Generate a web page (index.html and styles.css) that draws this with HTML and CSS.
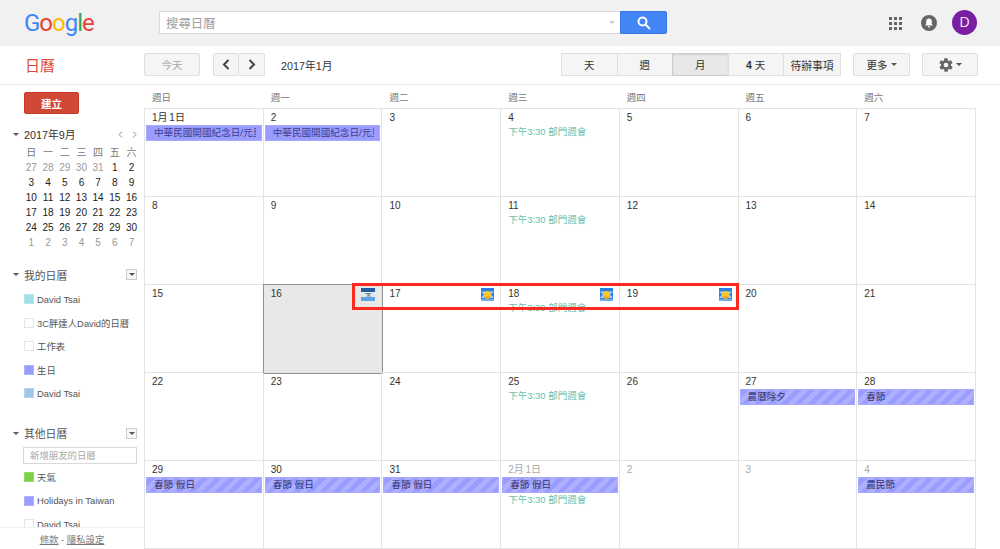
FILE: index.html
```html
<!DOCTYPE html>
<html lang="zh-Hant">
<head>
  <meta charset="UTF-8">
  <meta name="viewport" content="width=device-width, initial-scale=1">
  <title>日曆</title>
  <link rel="stylesheet" href="styles.css">
</head>
<body>
<svg class="defs" width="0" height="0">
  <symbol id="sun" viewBox="0 0 13 13">
    <rect width="13" height="13" fill="#2b7fe0"/>
    <path d="M0 3.500h13L10 6.500l3 3.500H0l3-3.500z" fill="#a9d2f2"/>
    <circle cx="6.500" cy="6.500" r="3.500" fill="#fcc62a"/>
    <path d="M3 8.500h7l-2 2.500H5z" fill="#f2a51c"/>
    <rect y="11" width="13" height="2" fill="#6fb0ea"/>
  </symbol>
  <symbol id="cloud" viewBox="0 0 14 13">
    <rect width="14" height="13" fill="#e4e9ee"/>
    <rect width="14" height="4" fill="#1f5d9c"/>
    <path d="M3 5h8L8 7l3 1.500H5L7 7z" fill="#7d8c9c"/>
    <rect y="9" width="14" height="4" fill="#5fa3e4"/>
  </symbol>
</svg>

<header class="topbar">
  <div class="logo"><span class="g-blue">G</span><span class="g-red">o</span><span class="g-yellow">o</span><span class="g-blue">g</span><span class="g-green">l</span><span class="g-red">e</span></div>
  <div class="search">
    <div class="search-input">
      <span>搜尋日曆</span>
      <i class="search-caret"></i>
    </div>
    <button class="search-btn">
      <svg width="14" height="14" viewBox="0 0 14 14" fill="none" stroke="#fff" stroke-width="2"><circle cx="5.500" cy="5.500" r="4"/><path d="M8.500 8.500l4.500 4.500"/></svg>
    </button>
  </div>
  <div class="top-icons">
    <svg class="apps" width="13" height="13" viewBox="0 0 13 13" fill="#666">
      <rect width="3" height="3"/><rect x="5" width="3" height="3"/><rect x="10" width="3" height="3"/>
      <rect y="5" width="3" height="3"/><rect x="5" y="5" width="3" height="3"/><rect x="10" y="5" width="3" height="3"/>
      <rect y="10" width="3" height="3"/><rect x="5" y="10" width="3" height="3"/><rect x="10" y="10" width="3" height="3"/>
    </svg>
    <svg class="bell" width="16" height="16" viewBox="0 0 16 16">
      <circle cx="8" cy="8" r="8" fill="#666"/>
      <path d="M8 3.500c-1.800 0-2.800 1.300-2.800 3v2.200L4.200 10.400h7.600l-1-1.700V6.500c0-1.700-1-3-2.800-3z" fill="#fff"/>
      <path d="M6.800 11.200h2.400a1.200 1.200 0 0 1-2.400 0z" fill="#fff"/>
    </svg>
    <div class="avatar">D</div>
  </div>
</header>

<div class="toolbar">
  <div class="app-name">日曆</div>
  <button class="btn btn-today">今天</button>
  <div class="nav-group">
    <button class="btn nav-btn">
      <svg width="8" height="11" viewBox="0 0 8 11" fill="none" stroke="#444" stroke-width="2"><path d="M6.500 1L2 5.500 6.500 10"/></svg>
    </button>
    <button class="btn nav-btn">
      <svg width="8" height="11" viewBox="0 0 8 11" fill="none" stroke="#444" stroke-width="2"><path d="M1.500 1L6 5.500 1.500 10"/></svg>
    </button>
  </div>
  <div class="range">2017年1月</div>
  <div class="views">
    <button class="btn view">天</button>
    <button class="btn view">週</button>
    <button class="btn view view-on">月</button>
    <button class="btn view"><b>4</b>&nbsp;天</button>
    <button class="btn view">待辦事項</button>
  </div>
  <button class="btn btn-more">更多<i class="caret"></i></button>
  <button class="btn btn-gear">
    <svg width="16" height="16" viewBox="0 0 24 24" fill="#666"><path d="M19.400 13c.1-.3.1-.7.1-1s0-.7-.1-1l2.100-1.600c.2-.2.300-.4.100-.7l-2-3.400c-.1-.2-.4-.3-.6-.2l-2.500 1c-.5-.4-1.100-.7-1.700-1l-.4-2.600c0-.3-.2-.5-.5-.5h-4c-.3 0-.5.2-.5.500l-.4 2.600c-.6.300-1.200.6-1.700 1l-2.500-1c-.2-.1-.5 0-.6.200l-2 3.400c-.1.300-.1.500.1.700L4.600 11c-.1.300-.1.700-.1 1s0 .7.100 1l-2.100 1.600c-.2.200-.3.400-.1.700l2 3.400c.1.200.4.300.6.200l2.500-1c.5.400 1.100.7 1.700 1l.4 2.600c0 .3.200.5.500.5h4c.3 0 .5-.2.500-.5l.4-2.600c.6-.3 1.200-.6 1.700-1l2.500 1c.2.100.5 0 .6-.2l2-3.400c.1-.3.100-.5-.1-.7zM12 15.500a3.500 3.500 0 1 1 0-7 3.500 3.500 0 0 1 0 7z"/></svg>
    <i class="caret"></i>
  </button>
</div>

<main class="main">
  <aside class="sidebar">
    <div class="side-scroll">
      <button class="create">建立</button>

      <div class="side-head mini-head">
        <i class="caret"></i><span class="mini-title">2017年9月</span>
        <span class="mini-arrows">
          <svg width="5" height="7" viewBox="0 0 5 7" fill="none" stroke="#888"><path d="M4 .5l-3 3 3 3"/></svg>
          <svg width="5" height="7" viewBox="0 0 5 7" fill="none" stroke="#888"><path d="M1 .5l3 3-3 3"/></svg>
        </span>
      </div>
      <div class="mini">
        <span class="dow">日</span><span class="dow">一</span><span class="dow">二</span><span class="dow">三</span><span class="dow">四</span><span class="dow">五</span><span class="dow">六</span>
        <span class="off">27</span><span class="off">28</span><span class="off">29</span><span class="off">30</span><span class="off">31</span><span>1</span><span>2</span>
        <span>3</span><span>4</span><span>5</span><span>6</span><span>7</span><span>8</span><span>9</span>
        <span>10</span><span>11</span><span>12</span><span>13</span><span>14</span><span>15</span><span>16</span>
        <span>17</span><span>18</span><span>19</span><span>20</span><span>21</span><span>22</span><span>23</span>
        <span>24</span><span>25</span><span>26</span><span>27</span><span>28</span><span>29</span><span>30</span>
        <span class="off">1</span><span class="off">2</span><span class="off">3</span><span class="off">4</span><span class="off">5</span><span class="off">6</span><span class="off">7</span>
      </div>

      <div class="side-head my-head">
        <i class="caret"></i><span class="side-title">我的日曆</span><span class="drop"><i class="caret"></i></span>
      </div>
      <ul class="cal-list">
        <li><i class="swatch sw-teal"></i>David Tsai</li>
        <li><i class="swatch"></i>3C胖達人David的日曆</li>
        <li><i class="swatch"></i>工作表</li>
        <li><i class="swatch sw-purple"></i>生日</li>
        <li><i class="swatch sw-blue"></i>David Tsai</li>
      </ul>

      <div class="side-head other-head">
        <i class="caret"></i><span class="side-title">其他日曆</span><span class="drop"><i class="caret"></i></span>
      </div>
      <div class="add-friend">新增朋友的日曆</div>
      <ul class="cal-list other-list">
        <li><i class="swatch sw-green"></i>天氣</li>
        <li><i class="swatch sw-purple"></i>Holidays in Taiwan</li>
        <li><i class="swatch"></i>David Tsai</li>
      </ul>
    </div>
    <div class="side-foot"><a>條款</a> - <a>隱私設定</a></div>
  </aside>

  <section class="month">
    <div class="dow-row">
      <span>週日</span><span>週一</span><span>週二</span><span>週三</span><span>週四</span><span>週五</span><span>週六</span>
    </div>
    <div class="grid">
      <div class="cell"><div class="date">1月 1日</div><div class="event"><span>中華民國開國紀念日/元旦</span></div></div>
      <div class="cell"><div class="date">2</div><div class="event"><span>中華民國開國紀念日/元旦</span></div></div>
      <div class="cell"><div class="date">3</div></div>
      <div class="cell"><div class="date">4</div><div class="timed">下午3:30 部門週會</div></div>
      <div class="cell"><div class="date">5</div></div>
      <div class="cell"><div class="date">6</div></div>
      <div class="cell"><div class="date">7</div></div>

      <div class="cell"><div class="date">8</div></div>
      <div class="cell"><div class="date">9</div></div>
      <div class="cell"><div class="date">10</div></div>
      <div class="cell"><div class="date">11</div><div class="timed">下午3:30 部門週會</div></div>
      <div class="cell"><div class="date">12</div></div>
      <div class="cell"><div class="date">13</div></div>
      <div class="cell"><div class="date">14</div></div>

      <div class="cell"><div class="date">15</div></div>
      <div class="cell today"><div class="date">16<svg class="wx wx-wide"><use href="#cloud"/></svg></div></div>
      <div class="cell"><div class="date">17<svg class="wx"><use href="#sun"/></svg></div></div>
      <div class="cell"><div class="date">18<svg class="wx"><use href="#sun"/></svg></div><div class="timed">下午3:30 部門週會</div></div>
      <div class="cell"><div class="date">19<svg class="wx"><use href="#sun"/></svg></div></div>
      <div class="cell"><div class="date">20</div></div>
      <div class="cell"><div class="date">21</div></div>

      <div class="cell"><div class="date">22</div></div>
      <div class="cell"><div class="date">23</div></div>
      <div class="cell"><div class="date">24</div></div>
      <div class="cell"><div class="date">25</div><div class="timed">下午3:30 部門週會</div></div>
      <div class="cell"><div class="date">26</div></div>
      <div class="cell"><div class="date">27</div><div class="event stripe"><span>農曆除夕</span></div></div>
      <div class="cell"><div class="date">28</div><div class="event stripe"><span>春節</span></div></div>

      <div class="cell"><div class="date">29</div><div class="event stripe"><span>春節 假日</span></div></div>
      <div class="cell"><div class="date">30</div><div class="event stripe"><span>春節 假日</span></div></div>
      <div class="cell"><div class="date">31</div><div class="event stripe"><span>春節 假日</span></div></div>
      <div class="cell"><div class="date out">2月 1日</div><div class="event stripe"><span>春節 假日</span></div><div class="timed">下午3:30 部門週會</div></div>
      <div class="cell"><div class="date out">2</div></div>
      <div class="cell"><div class="date out">3</div></div>
      <div class="cell"><div class="date out">4</div><div class="event stripe"><span>農民節</span></div></div>
    </div>
  </section>
</main>

<div class="highlight"></div>
</body>
</html>
```

FILE: styles.css
```css
* {
  box-sizing: border-box;
}
body {
  margin: 0;
  height: 549px;
  overflow: hidden;
  background: #fff;
  color: #333;
  font-family: "Liberation Sans", "Noto Sans CJK TC", sans-serif;
  font-size: 10px;
  position: relative;
}
i {
  display: block;
}
ul {
  list-style: none;
  margin: 0;
  padding: 0;
}
.defs {
  position: absolute;
}

/* top bar */
.topbar {
  height: 46px;
  background: #f1f1f1;
  display: flex;
  align-items: center;
  padding: 0 23px 0 24px;
}
.logo {
  width: 135px;
  font-family: Roboto, sans-serif;
  font-size: 24px;
  letter-spacing: -1px;
  line-height: 46px;
}
.g-blue { color: #4285f4; }
.g-red { color: #ea4335; }
.g-yellow { color: #fbbc05; }
.g-green { color: #34a853; }
.search {
  display: flex;
  width: 508px;
  height: 23px;
  margin-top: -1px;
}
.search-input {
  flex: 1;
  display: flex;
  align-items: center;
  justify-content: space-between;
  background: #fff;
  border: 1px solid #d9d9d9;
  border-right: none;
  padding: 0 5px 0 6px;
  color: #a0a0a0;
  font-size: 12.400px;
}
.search-caret {
  border: 3px solid transparent;
  border-top: 3px solid #ccc;
  border-bottom: none;
}
.search-btn {
  width: 47px;
  background: #4285f4;
  border: 1px solid #3b78e7;
  border-radius: 0 2px 2px 0;
  padding: 0;
  display: flex;
  align-items: center;
  justify-content: center;
}
.top-icons {
  margin-left: auto;
  display: flex;
  align-items: center;
}
.bell {
  margin-left: 19px;
}
.avatar {
  margin: -1px 0 0 15px;
  width: 25px;
  height: 25px;
  border-radius: 50%;
  background: #7b1fa2;
  color: #f0e0f5;
  font-size: 14px;
  line-height: 25px;
  text-align: center;
}

/* toolbar */
.toolbar {
  height: 39px;
  border-bottom: 1px solid #ebebeb;
  display: flex;
  align-items: center;
  padding: 0 22px 1px 25px;
}
.app-name {
  width: 119px;
  color: #dd4b39;
  font-size: 15px;
}
.btn {
  height: 23px;
  background: #f5f5f5;
  border: 1px solid #dfdfdf;
  border-radius: 2px;
  color: #333;
  font-family: inherit;
  font-size: 10.500px;
  padding: 0;
  display: flex;
  align-items: center;
  justify-content: center;
}
.btn-today {
  width: 56px;
  color: #aaa;
}
.nav-group {
  display: flex;
  margin-left: 13px;
}
.nav-btn {
  width: 26px;
}
.nav-btn + .nav-btn {
  border-left: none;
  border-radius: 0 2px 2px 0;
}
.range {
  margin-left: 16px;
  font-size: 10.800px;
}
.views {
  display: flex;
  margin-left: auto;
}
.view {
  width: 56.500px;
  margin-left: -1px;
  border-radius: 0;
}
.view:last-child {
  width: 58px;
  font-size: 10.800px;
}
.view-on {
  background: #e8e8e8;
  border-color: #ccc;
  box-shadow: inset 0 1px 2px rgba(0, 0, 0, .1);
}
.btn-more {
  width: 57px;
  margin-left: 12px;
  gap: 3px;
}
.btn-gear {
  width: 56px;
  margin-left: 12px;
  gap: 2px;
}
.caret {
  border: 3px solid transparent;
  border-top: 3px solid #555;
  border-bottom: none;
}

/* layout under the bars */
.main {
  display: flex;
  height: 464px;
}
.sidebar {
  width: 144px;
  flex-shrink: 0;
  display: flex;
  flex-direction: column;
}
.side-scroll {
  flex: 1;
  min-height: 0;
  overflow: hidden;
  padding-top: 7px;
}
.create {
  display: block;
  width: 55px;
  height: 22px;
  margin-left: 24px;
  padding: 0;
  background: #d14836;
  border: 1px solid #c53929;
  border-radius: 2px;
  color: #fff;
  font-family: inherit;
  font-size: 10.500px;
  font-weight: bold;
}
.side-head {
  display: flex;
  align-items: center;
  height: 16px;
  padding-left: 13px;
}
.side-head .caret {
  margin-right: 5px;
}
.mini-head {
  margin-top: 12px;
}
.mini-title {
  font-size: 10.800px;
}
.mini-arrows {
  display: flex;
  gap: 9px;
  margin-left: 42px;
}
.mini {
  display: grid;
  grid-template-columns: repeat(7, 16.700px);
  grid-auto-rows: 15px;
  margin: 2.500px 0 0 23px;
  line-height: 15px;
  text-align: center;
  color: #222;
}
.mini .off {
  color: #999;
}
.mini .dow {
  color: #777;
}
.my-head {
  margin-top: 17px;
}
.other-head {
  margin-top: 20px;
}
.side-title {
  font-size: 10.800px;
  color: #555;
}
.drop {
  margin-left: auto;
  margin-right: 7px;
  width: 11px;
  height: 11px;
  background: #f6f6f6;
  border: 1px solid #ccc;
  display: flex;
  align-items: center;
  justify-content: center;
}
.drop .caret {
  margin-right: 0;
}
.cal-list {
  margin-top: 5px;
}
.cal-list li {
  display: flex;
  align-items: center;
  height: 23.500px;
  padding-left: 24px;
  color: #555;
  font-size: 9.400px;
  white-space: nowrap;
}
.swatch {
  width: 10px;
  height: 10px;
  margin-right: 3px;
  border: 1px solid #e5e5e5;
  background: #fff;
}
.sw-teal { background: #9fe1e7; border-color: #b4e8ec; }
.sw-purple { background: #9a9cff; border-color: #b0b2ff; }
.sw-blue { background: #9fc6e7; border-color: #b4d3ee; }
.sw-green { background: #7bd148; border-color: #93da68; }
.add-friend {
  width: 114px;
  height: 17px;
  margin: 6px 0 0 23px;
  padding-left: 6px;
  border: 1px solid #d9d9d9;
  color: #aaa;
  font-size: 9.400px;
  line-height: 15px;
}
.other-list {
  margin-top: 1.600px;
}
.side-foot {
  height: 22px;
  border-top: 1px solid #f1f1f1;
  text-align: center;
  color: #777;
  font-size: 9.400px;
  line-height: 24px;
}
.side-foot a {
  text-decoration: underline;
}

/* month grid */
.month {
  width: 832px;
}
.dow-row {
  display: grid;
  grid-template-columns: repeat(7, 1fr);
  height: 23px;
  padding-left: 1px;
  color: #777;
  font-size: 9.500px;
  line-height: 25px;
}
.dow-row span {
  padding-left: 7px;
}
.grid {
  display: grid;
  grid-template-columns: repeat(7, 1fr);
  grid-template-rows: repeat(5, 88px);
  border-top: 1px solid #e4e4e4;
  border-left: 1px solid #e4e4e4;
}
.cell {
  min-width: 0;
  border-right: 1px solid #e4e4e4;
  border-bottom: 1px solid #e4e4e4;
}
.today {
  background: #e8e8e8;
  outline: 1px solid #909090;
}
.date {
  display: flex;
  justify-content: space-between;
  height: 16px;
  padding: 2px 6px 0 7px;
  line-height: 14px;
  word-spacing: -1px;
  color: #333;
}
.date.out {
  color: #aaa;
}
.wx {
  width: 13px;
  height: 13px;
  margin-top: 1px;
}
.wx-wide {
  width: 14px;
}
.event {
  height: 16px;
  margin: 0 1px;
  padding: 0 5px 0 7px;
  background: #9a9cff;
  border: 1px solid #a7a9ff;
  color: #3e3e8e;
  font-size: 9.600px;
  line-height: 14px;
}
.event span {
  display: block;
  overflow: hidden;
  white-space: nowrap;
}
.event.stripe {
  color: #33336b;
  background: repeating-linear-gradient(-45deg, #9a9cff 0 4.700px, #adafff 4.700px 9.400px);
}
.timed {
  padding-left: 7px;
  color: #66bfae;
  font-size: 9.500px;
  line-height: 14px;
}

/* red mark drawn over the grid */
.highlight {
  position: absolute;
  left: 352px;
  top: 283px;
  width: 387px;
  height: 27px;
  border: 3px solid #fb2a20;
}
```
